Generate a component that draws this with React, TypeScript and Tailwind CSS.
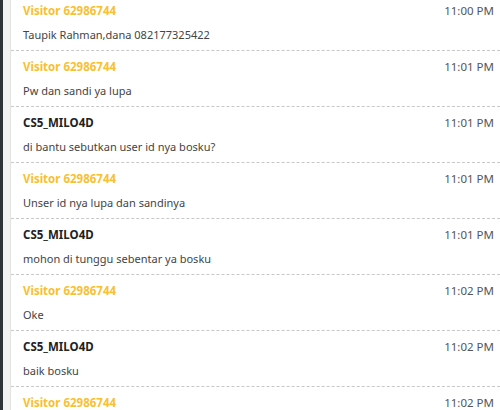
import React from 'react';

type Msg = { from: string; staff?: boolean; time: string; text: string };

const messages: Msg[] = [
  { from: 'Visitor 62986744', time: '11:00 PM', text: 'Taupik Rahman,dana 082177325422' },
  { from: 'Visitor 62986744', time: '11:01 PM', text: 'Pw dan sandi ya lupa' },
  { from: 'CS5_MILO4D', staff: true, time: '11:01 PM', text: 'di bantu sebutkan user id nya bosku?' },
  { from: 'Visitor 62986744', time: '11:01 PM', text: 'Unser id nya lupa dan sandinya' },
  { from: 'CS5_MILO4D', staff: true, time: '11:01 PM', text: 'mohon di tunggu sebentar ya bosku' },
  { from: 'Visitor 62986744', time: '11:02 PM', text: 'Oke' },
  { from: 'CS5_MILO4D', staff: true, time: '11:02 PM', text: 'baik bosku' },
  { from: 'Visitor 62986744', time: '11:02 PM', text: 'Sudah bosku' },
];

export default function App() {
  return (
    <div
      className="flex h-[410px] w-[500px] overflow-hidden bg-white"
      style={{ fontFamily: '"Noto Sans", "Open Sans", sans-serif' }}
    >
      {/* side edge */}
      <div className="w-[3px] shrink-0 bg-[#2f3437]" />
      <div className="w-[8px] shrink-0 border-r border-[#e3e3e3] bg-[#f3f3f3]" />

      {/* transcript */}
      <div className="-mt-[6px] flex-1">
        {messages.map((m, i) => (
          <div key={i} className="h-[56px] border-t border-dashed border-[#c8c8c8] pl-[12px] pr-[6px] pt-[8px]">
            <div className="flex items-center justify-between leading-[16px]">
              <span className={`text-[11.5px] font-bold ${m.staff ? 'text-[#222]' : 'text-[#f9c02f]'}`}>{m.from}</span>
              <span className="text-[11.5px] text-[#555]">{m.time}</span>
            </div>
            <div className="mt-[8px] text-[11px] leading-[16px] text-[#444]">{m.text}</div>
          </div>
        ))}
      </div>
    </div>
  );
}
